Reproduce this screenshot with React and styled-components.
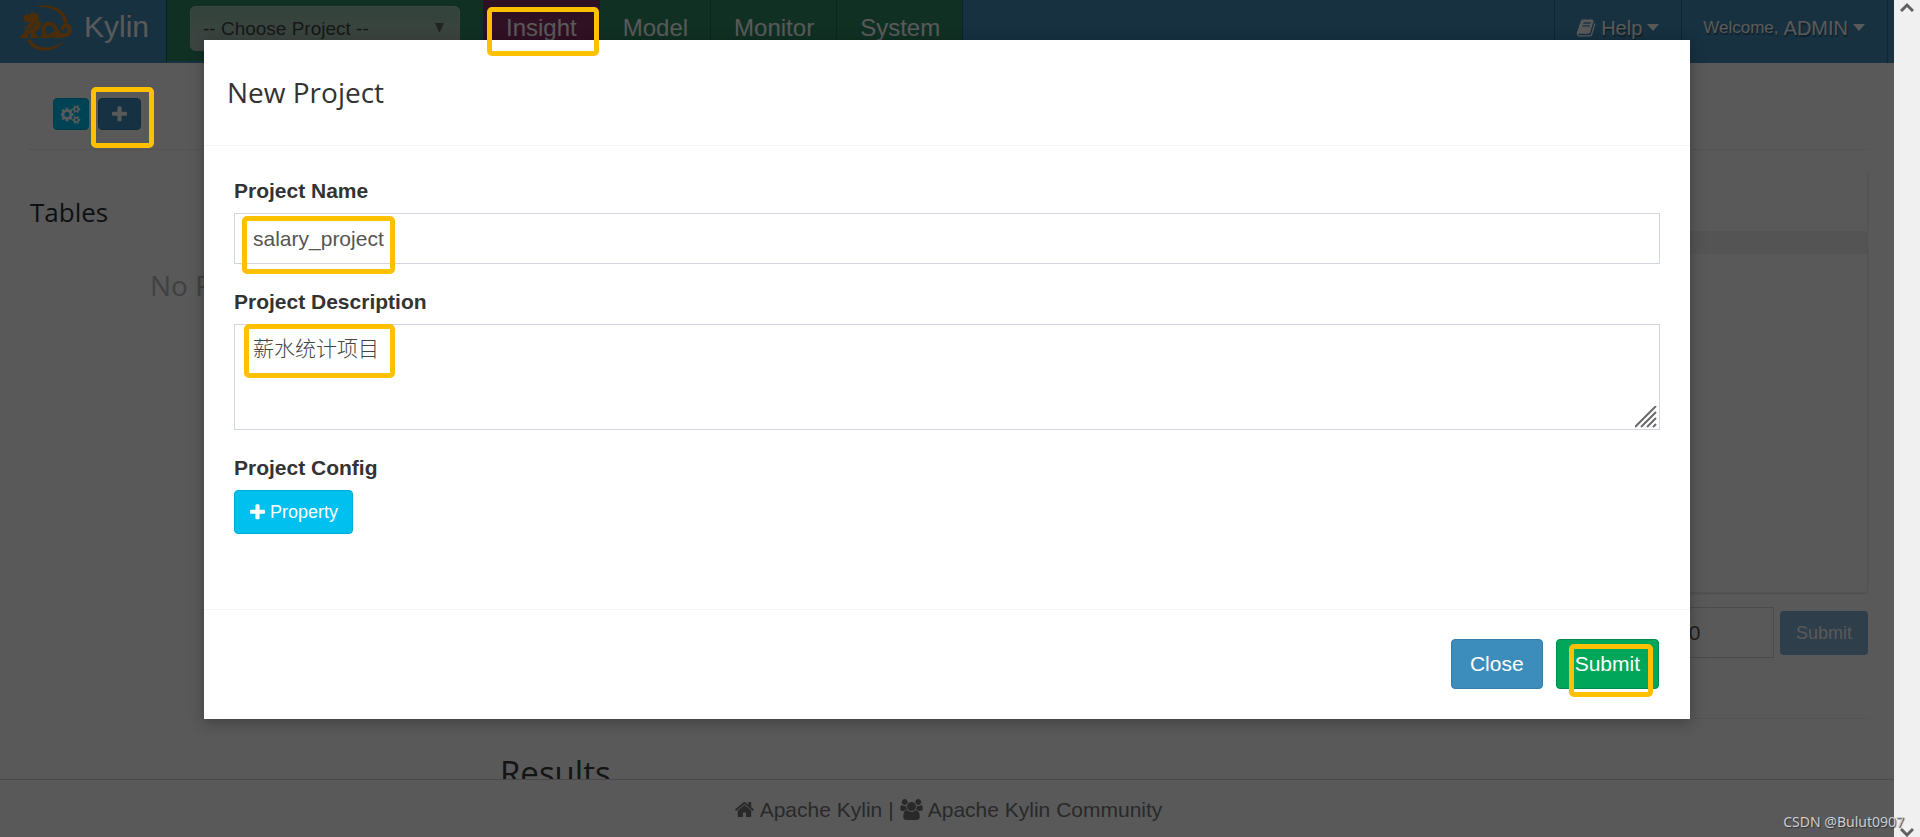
import styled, { createGlobalStyle } from 'styled-components';

const GlobalStyle = createGlobalStyle`
   * {
      box-sizing: border-box;
   }

   body {
      margin: 0;
      overflow: hidden;
      background: #fff;
      color: #777;
      font-family: 'Liberation Sans', Arial, sans-serif;
      font-size: 21px;
      line-height: 30px;
   }

   button,
   input,
   select,
   textarea {
      font: inherit;
   }
`;

const Shell = styled.div`
   display: flex;
   height: 100vh;
`;

const Page = styled.div`
   position: relative;
   flex: 1;
   min-width: 0;
   display: flex;
   flex-direction: column;
`;

const Navbar = styled.header`
   display: flex;
   flex: none;
   height: 63px;
   background: #438eb9;
   color: #fff;
`;

const Brand = styled.a`
   display: flex;
   gap: 10px;
   width: 166px;
   padding: 4px 0 0 18px;
   color: #fff;
   font-size: 30px;
   line-height: 46px;
   text-decoration: none;
`;

const ProjectBox = styled.div`
   position: relative;
   height: 61px;
   padding: 6px 23px 0 24px;
   background: #2e8965;
   box-shadow: inset 1px 0 #1f5f46;
`;

const ProjectSelect = styled.select`
   width: 270px;
   height: 45px;
   padding: 0 12px;
   border: 1px solid #aac6ba;
   border-radius: 5px;
   background: linear-gradient(#93bfab, #b3c6bd);
   color: #444;
   font-size: 19px;
   appearance: none;
`;

const SelectArrow = styled.svg`
   position: absolute;
   top: 23px;
   right: 39px;
   pointer-events: none;
`;

const NavItem = styled.a`
   height: 61px;
   padding: 13px 23px 0;
   background: ${(props) => (props.$active ? '#892e65' : '#2e8965')};
   box-shadow: inset -1px 0 #2d6570;
   color: #fff;
   font-size: 24px;
   text-decoration: none;
`;

const UserMenu = styled.nav`
   display: flex;
   margin-left: auto;
   padding-right: 7px;
`;

const UserItem = styled.a`
   display: flex;
   align-items: center;
   gap: 5px;
   height: 63px;
   padding: 0 22px 8px;
   box-shadow: inset 1px 0 #2c6b90, 1px 0 #2c6b90;
   color: #fff;
   font-size: 20px;
   text-decoration: none;
   text-shadow: 1px 2px 1px rgba(0, 0, 0, 0.4);
`;

const Welcome = styled.small`
   font-size: 17px;
`;

const Main = styled.main`
   flex: 1;
   min-height: 0;
   overflow: hidden;
   padding: 0 26px 0 30px;
`;

const Tools = styled.div`
   display: flex;
   gap: 9px;
   height: 87px;
   padding: 35px 0 0 23px;
   border-bottom: 1px dotted #e2e2e2;
`;

const ToolButton = styled.button`
   display: flex;
   align-items: center;
   justify-content: center;
   width: ${(props) => (props.$wide ? 43 : 36)}px;
   height: 32px;
   padding: 0;
   border: 1px solid ${(props) => (props.$wide ? '#367fa9' : '#00acd6')};
   border-radius: 4px;
   background: ${(props) => (props.$wide ? '#3c8dbc' : '#00c0ef')};
   color: #fff;
`;

const Columns = styled.div`
   display: grid;
   grid-template-columns: 440px 1fr;
   gap: 30px;
`;

const Heading = styled.h2`
   margin: 0;
   color: #26333b;
   font-family: 'Open Sans', sans-serif;
   font-size: 26px;
   font-weight: 400;
   line-height: 40px;
`;

const ResultsHeading = styled(Heading)`
   margin: 34px 0 0;
   color: #393939;
   font-size: 33px;
`;

const TablesPanel = styled.section`
   padding-top: 42px;
`;

const NoResult = styled.p`
   margin: 33px 0 0 120px;
   color: #b8b8b8;
   font-family: 'Open Sans', sans-serif;
   font-size: 28px;
   line-height: 40px;
`;

const QueryCard = styled.section`
   height: 422px;
   margin-top: 21px;
   padding-top: 60px;
   border: 1px solid #ececec;
   border-top: 0;
   border-radius: 5px;
   box-shadow: 0 1px 2px #ddd;
`;

const EditorStrip = styled.div`
   height: 23px;
   background: #f0f0f0;
`;

const QueryRow = styled.form`
   display: flex;
   align-items: center;
   justify-content: flex-end;
   gap: 6px;
   height: 126px;
   padding-bottom: 46px;
   border-bottom: 1px dotted #e2e2e2;
`;

const LimitInput = styled.input`
   width: 140px;
   height: 51px;
   padding: 0 7px;
   border: 1px solid #d2d6de;
   color: #555;
`;

const QuerySubmit = styled.button`
   width: 88px;
   height: 44px;
   border: 0;
   border-radius: 4px;
   background: #87b1d8;
   color: #fff;
   font-size: 18px;
`;

const Footer = styled.footer`
   display: flex;
   flex: none;
   align-items: center;
   justify-content: center;
   gap: 6px;
   height: 58px;
   border-top: 1px solid #d2d2d2;
   padding: 2px 0 0 2px;
`;

const FooterLink = styled.a`
   display: flex;
   align-items: center;
   gap: 5px;
   color: #777;
   text-decoration: none;
`;

const Backdrop = styled.div`
   position: absolute;
   inset: 0;
   display: flex;
   align-items: flex-start;
   justify-content: center;
   padding-top: 40px;
   background: rgba(0, 0, 0, 0.65);
`;

const Modal = styled.form`
   width: 1486px;
   max-width: 90%;
   background: #fff;
   box-shadow: 0 3px 14px rgba(0, 0, 0, 0.3);
`;

const ModalHeader = styled.div`
   padding: 32px 23px 33px;
   border-bottom: 1px solid #f4f4f4;
`;

const ModalTitle = styled(Heading)`
   color: #333;
   font-size: 28px;
`;

const ModalBody = styled.div`
   padding: 30px 30px 75px;
`;

const Field = styled.div`
   display: flex;
   flex-direction: column;
   align-items: flex-start;
   margin-bottom: ${(props) => props.$space || 0}px;
`;

const Label = styled.label`
   margin-bottom: 7px;
   color: #333;
   font-weight: 700;
`;

const TextInput = styled.input`
   width: 100%;
   height: 51px;
   padding: 9px 18px;
   border: 1px solid #d2d6de;
   color: #555;
`;

const TextAreaBox = styled.div`
   position: relative;
   width: 100%;
`;

const TextArea = styled.textarea`
   display: block;
   width: 100%;
   height: 106px;
   padding: 9px 18px;
   border: 1px solid #d2d6de;
   color: #444;
   font-family: 'Liberation Sans', 'Noto Sans CJK SC', sans-serif;
   font-weight: 300;
   resize: vertical;

   &::-webkit-resizer {
      background: transparent;
   }
`;

const ResizeGrip = styled.svg`
   position: absolute;
   right: 3px;
   bottom: 2px;
   pointer-events: none;
`;

const PropertyButton = styled.button`
   display: flex;
   align-items: center;
   gap: 3px;
   height: 44px;
   padding: 0 14px 0 13px;
   border: 1px solid #00acd6;
   border-radius: 4px;
   background: #00c0ef;
   color: #fff;
   font-size: 18px;
`;

const ModalFooter = styled.div`
   display: flex;
   justify-content: flex-end;
   gap: 13px;
   padding: 29px 31px 30px;
   border-top: 1px solid #f4f4f4;
`;

const ModalButton = styled.button`
   height: 50px;
   padding: 0 18px;
   border: 1px solid ${(props) => (props.$success ? '#008d4c' : '#367fa9')};
   border-radius: 4px;
   background: ${(props) => (props.$success ? '#00a65a' : '#3c8dbc')};
   color: #fff;
`;

const Scrollbar = styled.div`
   display: flex;
   flex: none;
   flex-direction: column;
   align-items: center;
   justify-content: space-between;
   width: 26px;
   padding-top: 2px;
   background: #f0f0f0;
`;

// marker frames drawn over the page
const Marker = styled.div`
   position: absolute;
   top: ${(props) => props.$top}px;
   left: ${(props) => props.$left}px;
   width: ${(props) => props.$width}px;
   height: ${(props) => props.$height}px;
   border: 5px solid #ffc000;
   border-radius: 5px;
   pointer-events: none;
`;

const Watermark = styled.div`
   position: absolute;
   right: 16px;
   bottom: 3px;
   color: #ccc;
   font-family: 'Noto Sans', sans-serif;
   font-size: 14px;
   line-height: 24px;
   text-shadow: 1px 1px 1px #333;
`;

const markers = [
   { id: 'insight', left: 487, top: 7, width: 112, height: 49 },
   { id: 'add', left: 91, top: 87, width: 63, height: 61 },
   { id: 'name', left: 242, top: 216, width: 153, height: 58 },
   { id: 'description', left: 244, top: 324, width: 151, height: 54 },
   { id: 'submit', left: 1569, top: 644, width: 84, height: 53 },
];

const icons = {
   plus: {
      width: 1792,
      path: 'M1600 736v192q0 40-28 68t-68 28h-416v416q0 40-28 68t-68 28h-192q-40 0-68-28t-28-68v-416h-416q-40 0-68-28t-28-68v-192q0-40 28-68t68-28h416v-416q0-40 28-68t68-28h192q40 0 68 28t28 68v416h416q40 0 68 28t28 68z',
   },
   home: {
      width: 1792,
      path: 'M1472 992v480q0 26-19 45t-45 19h-384v-384h-256v384h-384q-26 0-45-19t-19-45v-480q0-1 .5-3t.5-3l575-474 575 474q1 2 1 6zm223-69l-62 74q-8 9-21 11h-3q-13 0-21-7l-692-577-692 577q-12 8-24 7-13-2-21-11l-62-74q-8-10-7-23.5t11-21.5l719-599q32-26 76-26t76 26l244 204v-195q0-14 9-23t23-9h192q14 0 23 9t9 23v408l219 182q10 8 11 21.5t-7 23.5z',
   },
   book: {
      width: 1792,
      path: 'M1703 478q40 57 18 129l-275 906q-19 64-76.5 107.5t-122.5 43.5h-923q-77 0-148.5-53.5t-99.5-131.5q-24-67-2-127 0-4 3-27t4-37q1-8-3-21.5t-3-19.5q2-11 8-21t16.5-23.5 16.5-23.5q23-38 45-91.5t30-91.5q3-10 .5-30t-.5-28q3-11 17-28t17-23q21-36 42-92t25-90q1-9-2.5-32t.5-28q4-13 22-30.5t22-22.5q19-26 42.5-84.5t27.5-96.5q1-8-3-25.5t-2-26.5q2-8 9-18t18-23 17-21q8-12 16.5-30.5t15-35 16-36 19.5-32 26.5-23.5 36-11.5 47.5 5.5l-1 3q38-9 51-9h761q74 0 114 56t18 130l-274 906q-36 119-71.5 153.5t-128.5 34.5h-869q-27 0-38 15-11 16-1 43 24 70 144 70h923q29 0 56-15.5t35-41.5l300-987q7-22 5-57 38 15 59 43zm-1064 2q-4 13 2 22.5t20 9.5h608q13 0 25.5-9.5t16.5-22.5l21-64q4-13-2-22.5t-20-9.5h-608q-13 0-25.5 9.5t-16.5 22.5zm-83 256q-4 13 2 22.5t20 9.5h608q13 0 25.5-9.5t16.5-22.5l21-64q4-13-2-22.5t-20-9.5h-608q-13 0-25.5 9.5t-16.5 22.5z',
   },
   cogs: {
      width: 1920,
      path: 'M832 896q0-106-75-181t-181-75-181 75-75 181 75 181 181 75 181-75 75-181zm768 512q0-52-38-90t-90-38-90 38-38 90q0 53 37.5 90.5t90.5 37.5 90.5-37.5 37.5-90.5zm0-1024q0-52-38-90t-90-38-90 38-38 90q0 53 37.5 90.5t90.5 37.5 90.5-37.5 37.5-90.5zm-384 421v185q0 10-7 19.5t-16 10.5l-155 24q-11 35-32 76 34 48 90 115 7 11 7 20 0 12-7 19-23 30-82.5 89.5t-78.5 59.5q-11 0-21-7l-115-90q-37 19-77 31-11 108-23 155-7 24-30 24h-186q-11 0-20-7.5t-10-17.5l-23-153q-34-10-75-31l-118 89q-7 7-20 7-11 0-21-8-144-133-144-160 0-9 7-19 10-14 41-53t47-61q-23-44-35-82l-152-24q-10-1-17-9.5t-7-19.5v-185q0-10 7-19.5t16-10.5l155-24q11-35 32-76-34-48-90-115-7-11-7-20 0-12 7-20 22-30 82-89t79-59q11 0 21 7l115 90q34-18 77-32 11-108 23-154 7-24 30-24h186q11 0 20 7.5t10 17.5l23 153q34 10 75 31l118-89q8-7 20-7 11 0 21 8 144 133 144 160 0 8-7 19-12 16-42 54t-45 60q23 48 34 82l152 23q10 2 17 10.5t7 19.5zm640 533v140q0 16-149 31-12 27-30 52 51 113 51 138 0 4-4 7-122 71-124 71-8 0-46-47t-52-68q-20 2-30 2t-30-2q-14 21-52 68t-46 47q-2 0-124-71-4-3-4-7 0-25 51-138-18-25-30-52-149-15-149-31v-140q0-16 149-31 13-29 30-52-51-113-51-138 0-4 4-7 4-2 35-20t59-34 30-16q8 0 46 46.5t52 67.5q20-2 30-2t30 2q51-71 92-112l6-2q4 0 124 70 4 3 4 7 0 25-51 138 17 23 30 52 149 15 149 31zm0-1024v140q0 16-149 31-12 27-30 52 51 113 51 138 0 4-4 7-122 71-124 71-8 0-46-47t-52-68q-20 2-30 2t-30-2q-14 21-52 68t-46 47q-2 0-124-71-4-3-4-7 0-25 51-138-18-25-30-52-149-15-149-31v-140q0-16 149-31 13-29 30-52-51-113-51-138 0-4 4-7 4-2 35-20t59-34 30-16q8 0 46 46.5t52 67.5q20-2 30-2t30 2q51-71 92-112l6-2q4 0 124 70 4 3 4 7 0 25-51 138 17 23 30 52 149 15 149 31z',
   },
   users: {
      width: 1920,
      path: 'M593 896q-162 5-265 128h-134q-82 0-138-40.5t-56-118.5q0-353 124-353 6 0 43.5 21t97.5 42.5 119 21.5q67 0 133-23-5 37-5 66 0 139 81 256zm1071 637q0 120-73 189.5t-194 69.5h-874q-121 0-194-69.5t-73-189.5q0-53 3.5-103.5t14-109 26.5-108.5 43-97.5 62-81 85.5-53.5 111.5-20q10 0 43 21.5t73 48 107 48 135 21.5 135-21.5 107-48 73-48 43-21.5q61 0 111.5 20t85.5 53.5 62 81 43 97.5 26.5 108.5 14 109 3.5 103.5zm-1024-1277q0 106-75 181t-181 75-181-75-75-181 75-181 181-75 181 75 75 181zm704 384q0 159-112.5 271.5t-271.5 112.5-271.5-112.5-112.5-271.5 112.5-271.5 271.5-112.5 271.5 112.5 112.5 271.5zm576 225q0 78-56 118.5t-138 40.5h-134q-103-123-265-128 81-117 81-256 0-29-5-66 66 23 133 23 59 0 119-21.5t97.5-42.5 43.5-21q124 0 124 353zm-128-609q0 106-75 181t-181 75-181-75-75-181 75-181 181-75 181 75 75 181z',
   },
};

function Icon({ name, size }) {
   const { width, path } = icons[name];

   return (
      <svg
         height={size}
         width={Math.round((size * width) / 1792)}
         viewBox={`0 0 ${width} 1792`}
         fill="currentColor"
      >
         <path d={path} />
      </svg>
   );
}

function Caret() {
   return (
      <svg width="12" height="7" viewBox="0 0 12 7" fill="currentColor">
         <path d="M0 0H12L6 7Z" />
      </svg>
   );
}

function Logo() {
   return (
      <svg width="56" height="48" viewBox="0 0 56 48" fill="#d6801c">
         <path d="M20 2C33-1 48 5 50 19L46 19C44 8 34 2 20 3Z" />
         <path d="M9 35C13 50 37 51 47 36C37 45 19 47 13 36Z" />
         <path d="M5 12L9 10L12 11L14 7L16 10L19 9L21 13L20 17L18 18L23 17C24 23 19 27 17 28L18 31L22 34L12 34L13 30L10 29L10 34L1 34L4 31L7 28C6 24 9 21 13 18L7 18L6 15Z" />
         <path d="M22 34L25 29L30 31L34 28L38 27L41 31L44 32L45 34L36 34L34 33L30 34Z" />
         <path
            d="M27 31C22 22 30 17 35 21C40 24 37 30 44 31C51 33 54 25 50 22C46 20 43 24 46 26"
            fill="none"
            stroke="#d6801c"
            strokeWidth="4"
         />
         <path d="M8 25C13 26 16 23 17 19" fill="none" stroke="#438eb9" strokeWidth="1" />
      </svg>
   );
}

function Arrow({ down }) {
   return (
      <svg width="14" height="10" viewBox="0 0 14 10" fill="none" stroke="#606060" strokeWidth="3">
         <path d={down ? 'M1 2L7 8L13 2' : 'M1 9L7 3L13 9'} />
      </svg>
   );
}

export default function App() {
   return (
      <>
         <GlobalStyle />
         <Shell>
            <Page>
               <Navbar>
                  <Brand href="#">
                     <Logo />
                     Kylin
                  </Brand>
                  <ProjectBox>
                     <ProjectSelect aria-label="Project">
                        <option>-- Choose Project --</option>
                     </ProjectSelect>
                     <SelectArrow width="9" height="9" viewBox="0 0 9 9" fill="#666">
                        <path d="M0 0H9L5 9H4Z" />
                     </SelectArrow>
                  </ProjectBox>
                  <NavItem href="#insight" $active>
                     Insight
                  </NavItem>
                  <NavItem href="#model">Model</NavItem>
                  <NavItem href="#monitor">Monitor</NavItem>
                  <NavItem href="#system">System</NavItem>
                  <UserMenu>
                     <UserItem href="#help">
                        <Icon name="book" size={20} />
                        Help
                        <Caret />
                     </UserItem>
                     <UserItem href="#user">
                        <Welcome>Welcome,</Welcome>
                        ADMIN
                        <Caret />
                     </UserItem>
                  </UserMenu>
               </Navbar>

               <Main>
                  <Tools>
                     <ToolButton type="button" aria-label="Manage projects">
                        <Icon name="cogs" size={19} />
                     </ToolButton>
                     <ToolButton type="button" aria-label="Add project" $wide>
                        <Icon name="plus" size={19} />
                     </ToolButton>
                  </Tools>
                  <Columns>
                     <TablesPanel>
                        <Heading>Tables</Heading>
                        <NoResult>No Result.</NoResult>
                     </TablesPanel>
                     <div>
                        <QueryCard>
                           <EditorStrip />
                        </QueryCard>
                        <QueryRow>
                           <LimitInput aria-label="Limit" defaultValue="50000" />
                           <QuerySubmit type="button">Submit</QuerySubmit>
                        </QueryRow>
                        <ResultsHeading>Results</ResultsHeading>
                     </div>
                  </Columns>
               </Main>

               <Footer>
                  <FooterLink href="#home">
                     <Icon name="home" size={21} />
                     Apache Kylin
                  </FooterLink>
                  |
                  <FooterLink href="#community">
                     <Icon name="users" size={21} />
                     Apache Kylin Community
                  </FooterLink>
               </Footer>

               <Backdrop>
                  <Modal>
                     <ModalHeader>
                        <ModalTitle>New Project</ModalTitle>
                     </ModalHeader>
                     <ModalBody>
                        <Field $space={23}>
                           <Label htmlFor="name">Project Name</Label>
                           <TextInput id="name" defaultValue="salary_project" />
                        </Field>
                        <Field $space={23}>
                           <Label htmlFor="description">Project Description</Label>
                           <TextAreaBox>
                              <TextArea id="description" defaultValue="薪水统计项目" />
                              <ResizeGrip
                                 width="22"
                                 height="22"
                                 viewBox="0 0 22 22"
                                 stroke="#6a6a6a"
                                 strokeWidth="2"
                              >
                                 <path d="M0 21L21 0M6 21L21 6M12 21L21 12M18 21L21 18" />
                              </ResizeGrip>
                           </TextAreaBox>
                        </Field>
                        <Field>
                           <Label htmlFor="config">Project Config</Label>
                           <PropertyButton id="config" type="button">
                              <Icon name="plus" size={19} />
                              Property
                           </PropertyButton>
                        </Field>
                     </ModalBody>
                     <ModalFooter>
                        <ModalButton type="button">Close</ModalButton>
                        <ModalButton type="button" $success>
                           Submit
                        </ModalButton>
                     </ModalFooter>
                  </Modal>
               </Backdrop>
            </Page>
            <Scrollbar>
               <Arrow />
               <Arrow down />
            </Scrollbar>
         </Shell>

         {markers.map((marker) => (
            <Marker
               key={marker.id}
               $left={marker.left}
               $top={marker.top}
               $width={marker.width}
               $height={marker.height}
            />
         ))}
         <Watermark>CSDN @Bulut0907</Watermark>
      </>
   );
}
